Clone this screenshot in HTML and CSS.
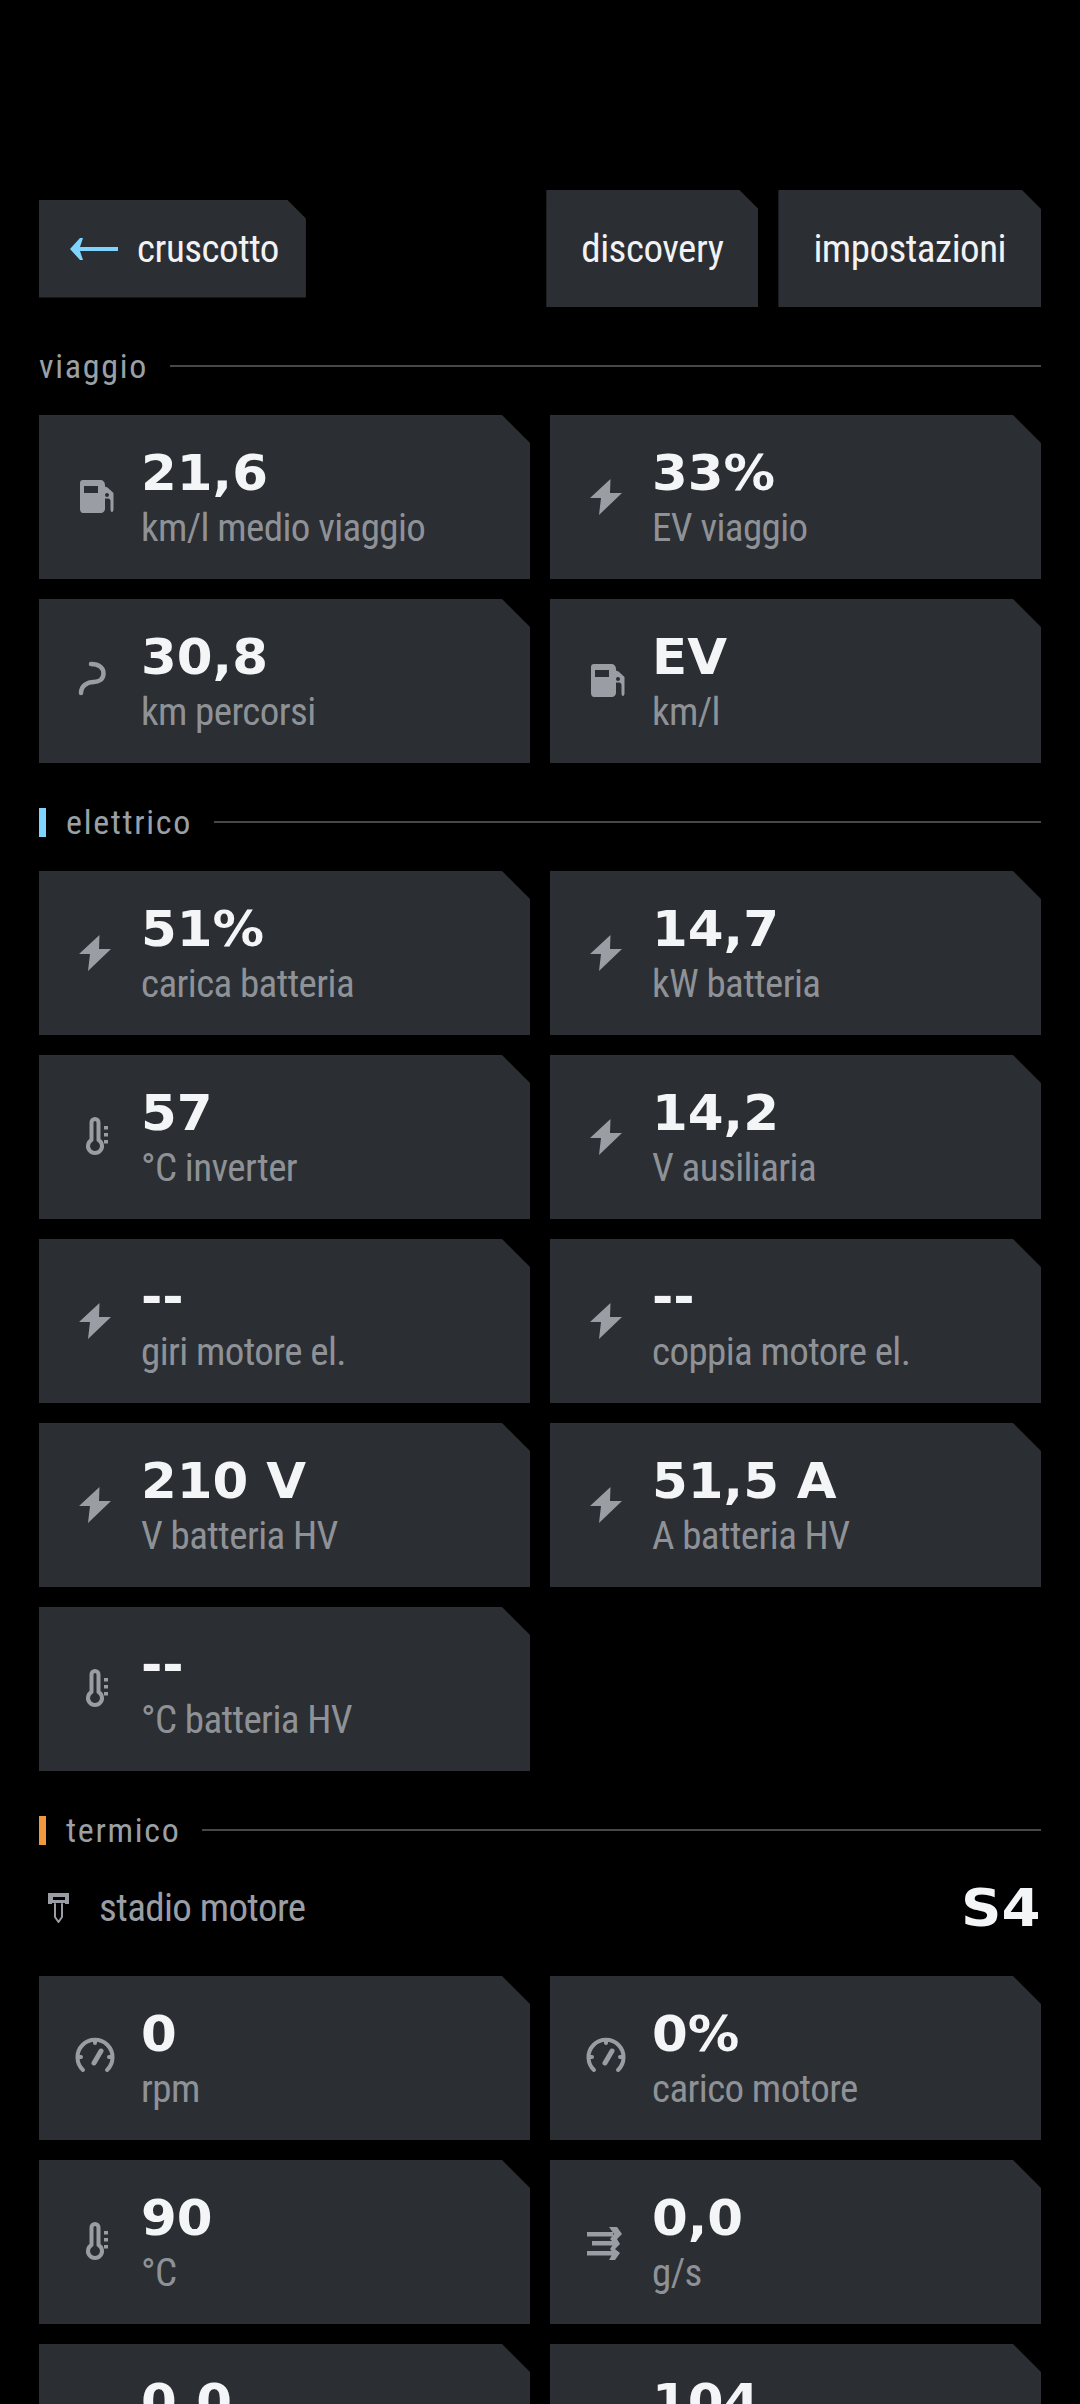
FILE: index.html
```html
<!DOCTYPE html>
<html lang="it">
<head>
  <meta charset="UTF-8">
  <meta name="viewport" content="width=device-width, initial-scale=1.0">
  <title>Cruscotto dettagli</title>
  <link rel="stylesheet" href="styles.css">
</head>
<body>
  <svg class="sprite" width="0" height="0">
    <symbol id="i-fuel" viewBox="0 0 48 48">
      <path fill-rule="evenodd" d="M10 7h17c3 0 5 2 5 5v1.500l2.500 1 6 5.500V36c0 2-.6 3-1.500 3s-1.500-1-1.500-3V28c0-1.500-1-2.500-2.500-2.500H32V36c0 2-2 4-4 4H10c-2 0-3-2-3-4V10c0-2 1-3 3-3zm1 6v7h14v-7zm23 7a2 2 0 1 0 0 4 2 2 0 0 0 0-4z"/>
    </symbol>
    <symbol id="i-bolt" viewBox="0 0 48 48">
      <polygon points="26.500,6 6,25 17,25 15,42 38,20 26,20"/>
    </symbol>
    <symbol id="i-route" viewBox="0 0 48 48">
      <path class="line" d="M18 7C26 7 31 11 30.500 17C30 23 25 25 21 25C14 25 8 29 8 36" stroke-width="4.500"/>
    </symbol>
    <symbol id="i-temp" viewBox="0 0 48 48">
      <path class="line" d="M18.500 27V9.500a3.500 3.500 0 0 1 7 0V27a7 7 0 1 1-7 0z" stroke-width="4"/>
      <rect x="31" y="13" width="4" height="3.500"/>
      <rect x="31" y="20" width="4" height="3.500"/>
      <rect x="31" y="27" width="4" height="3.500"/>
    </symbol>
    <symbol id="i-gauge" viewBox="0 0 48 48">
      <path class="line" d="M10 36A17.500 17.500 0 1 1 34 36" stroke-width="4"/>
      <path class="line" d="M22 6v3M5 23h3M36 23h3" stroke-width="4"/>
      <path class="line" d="M21 29L28 17" stroke-width="5"/>
    </symbol>
    <symbol id="i-flow" viewBox="0 0 48 48">
      <rect x="3" y="14" width="26" height="4.500"/>
      <rect x="8" y="23" width="22" height="4.500"/>
      <rect x="3" y="33" width="26" height="4.500"/>
      <polygon points="25,9 33,9 38,16 33,21 36,26 31,31 36,35 31,42 25,42 29,35 26,31 30,25 26,21 30,16"/>
    </symbol>
  </svg>

  <header class="top-bar">
    <a class="chip chip-back">
      <svg class="back-arrow" width="50" height="24" viewBox="0 0 50 24">
        <polygon points="11,1 14,1 11,10 49,10 49,14 11,14 14,23 11,23 1,12"/>
      </svg>
      cruscotto
    </a>
    <nav class="top-actions">
      <a class="chip">discovery</a>
      <a class="chip">impostazioni</a>
    </nav>
  </header>

  <h2 class="section-title"><span>viaggio</span></h2>
  <section class="cards">
    <div class="card"><svg class="icon"><use href="#i-fuel"/></svg><div><p class="value">21,6</p><p class="label">km/l medio viaggio</p></div></div>
    <div class="card"><svg class="icon"><use href="#i-bolt"/></svg><div><p class="value">33%</p><p class="label">EV viaggio</p></div></div>
    <div class="card"><svg class="icon"><use href="#i-route"/></svg><div><p class="value">30,8</p><p class="label">km percorsi</p></div></div>
    <div class="card"><svg class="icon"><use href="#i-fuel"/></svg><div><p class="value">EV</p><p class="label">km/l</p></div></div>
  </section>

  <h2 class="section-title"><i class="bar bar-blue"></i><span>elettrico</span></h2>
  <section class="cards">
    <div class="card"><svg class="icon"><use href="#i-bolt"/></svg><div><p class="value">51%</p><p class="label">carica batteria</p></div></div>
    <div class="card"><svg class="icon"><use href="#i-bolt"/></svg><div><p class="value">14,7</p><p class="label">kW batteria</p></div></div>
    <div class="card"><svg class="icon"><use href="#i-temp"/></svg><div><p class="value">57</p><p class="label">°C inverter</p></div></div>
    <div class="card"><svg class="icon"><use href="#i-bolt"/></svg><div><p class="value">14,2</p><p class="label">V ausiliaria</p></div></div>
    <div class="card"><svg class="icon"><use href="#i-bolt"/></svg><div><p class="value">--</p><p class="label">giri motore el.</p></div></div>
    <div class="card"><svg class="icon"><use href="#i-bolt"/></svg><div><p class="value">--</p><p class="label">coppia motore el.</p></div></div>
    <div class="card"><svg class="icon"><use href="#i-bolt"/></svg><div><p class="value">210 V</p><p class="label">V batteria HV</p></div></div>
    <div class="card"><svg class="icon"><use href="#i-bolt"/></svg><div><p class="value">51,5 A</p><p class="label">A batteria HV</p></div></div>
    <div class="card"><svg class="icon"><use href="#i-temp"/></svg><div><p class="value">--</p><p class="label">°C batteria HV</p></div></div>
  </section>

  <h2 class="section-title"><i class="bar bar-orange"></i><span>termico</span></h2>
  <div class="stage-row">
    <svg class="stage-icon" width="32" height="32" viewBox="0 0 32 32">
      <path fill-rule="evenodd" d="M5 1h21v11h-4v-1H9v1H5zm5 4v3h12V5z"/>
      <path class="line" d="M12 12v13l3.500 5 3.500-5V12" stroke-width="2"/>
    </svg>
    <span class="stage-name">stadio motore</span>
    <strong class="stage-value">S4</strong>
  </div>
  <section class="cards">
    <div class="card"><svg class="icon"><use href="#i-gauge"/></svg><div><p class="value">0</p><p class="label">rpm</p></div></div>
    <div class="card"><svg class="icon"><use href="#i-gauge"/></svg><div><p class="value">0%</p><p class="label">carico motore</p></div></div>
    <div class="card"><svg class="icon"><use href="#i-temp"/></svg><div><p class="value">90</p><p class="label">°C</p></div></div>
    <div class="card"><svg class="icon"><use href="#i-flow"/></svg><div><p class="value">0,0</p><p class="label">g/s</p></div></div>
    <div class="card"><div class="no-icon"><p class="value">0,0</p><p class="label">&nbsp;</p></div></div>
    <div class="card"><div class="no-icon"><p class="value">104</p><p class="label">&nbsp;</p></div></div>
  </section>
</body>
</html>
```

FILE: styles.css
```css
* {
  box-sizing: border-box;
}

html,
body {
  height: 2404px;
  overflow: hidden;
}

body {
  margin: 0;
  padding: 190px 39px 0;
  background-color: #000;
  color: #f4f5f6;
  font-family: "Roboto", "Liberation Sans", sans-serif;
  font-stretch: 75%;
}

p {
  margin: 0;
}

.sprite {
  position: absolute;
}

.line {
  fill: none;
  stroke: currentColor;
  stroke-linecap: round;
  stroke-linejoin: round;
}

/* top bar */
.top-bar {
  display: flex;
  justify-content: space-between;
  align-items: center;
  height: 117px;
}

.top-actions {
  display: flex;
  gap: 20px;
}

.chip {
  display: flex;
  align-items: center;
  height: 117px;
  padding: 0 35px;
  background-color: #2b2e33;
  clip-path: polygon(0 0, calc(100% - 19px) 0, 100% 19px, 100% 100%, 0 100%);
  font-size: 39px;
  font-stretch: 80%;
  letter-spacing: -0.5px;
  color: #f1f2f3;
}

.chip-back {
  gap: 18px;
  height: 98px;
  padding: 0 27px 0 30px;
}

.back-arrow {
  fill: #7fd4ff;
}

/* section headings */
.section-title {
  display: flex;
  align-items: center;
  gap: 22px;
  height: 40px;
  margin: 39px 0 29px;
  font-size: 34px;
  font-weight: 400;
  letter-spacing: 1.700px;
  color: #9aa0a6;
}

.section-title::after {
  content: "";
  flex: 1;
  height: 2px;
  background-color: #45474b;
}

.bar {
  width: 7px;
  height: 29px;
  margin-right: -2px;
}

.bar-blue {
  background-color: #7fd4ff;
}

.bar-orange {
  background-color: #f0983f;
}

/* cards */
.cards {
  display: grid;
  grid-template-columns: 1fr 1fr;
  gap: 20px;
}

.card {
  display: flex;
  align-items: center;
  gap: 20px;
  height: 164px;
  padding-left: 34px;
  background-color: #2b2e33;
  clip-path: polygon(0 0, calc(100% - 28px) 0, 100% 28px, 100% 100%, 0 100%);
}

.icon {
  flex: none;
  width: 48px;
  height: 48px;
  fill: #9a9ea4;
  color: #9a9ea4;
}

.no-icon {
  margin-left: 68px;
}

.value {
  margin-top: 2px;
  font-family: "DejaVu Sans", sans-serif;
  font-size: 49px;
  font-stretch: normal;
  font-weight: 700;
  line-height: 56px;
  transform: scaleX(1.05);
  transform-origin: left;
}

.label {
  margin-top: 4px;
  font-size: 39px;
  line-height: 44px;
  letter-spacing: -0.6px;
  color: #8e9297;
}

/* stage row */
.stage-row {
  display: flex;
  align-items: center;
  gap: 24px;
  height: 58px;
  margin-bottom: 39px;
  padding-left: 4px;
}

.stage-icon {
  fill: #9a9ea4;
  color: #9a9ea4;
}

.stage-name {
  flex: 1;
  font-size: 39px;
  letter-spacing: -0.6px;
  color: #9a9ea4;
}

.stage-value {
  font-family: "DejaVu Sans", sans-serif;
  font-size: 52px;
  font-stretch: normal;
  font-weight: 700;
  transform: scaleX(1.08);
  transform-origin: right;
}
```
